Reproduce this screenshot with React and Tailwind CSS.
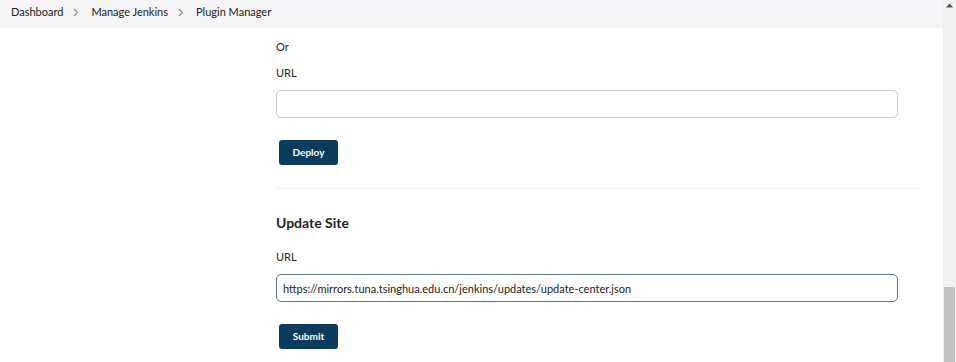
import { useState } from 'react'

function Chevron() {
  return (
    <svg width="6" height="9" viewBox="0 0 6 9" className="ml-[10px] mr-[12px]">
      <path d="M1 1l3.5 3.5L1 8" fill="none" stroke="#8a8a8a" strokeWidth="1.1" />
    </svg>
  )
}

function Field({ value, onChange, active }) {
  return (
    <input
      value={value}
      onChange={e => onChange(e.target.value)}
      className={`w-[622px] h-[28px] rounded-[5px] bg-white px-[6px] text-[11px] text-[#222] outline-none border ${active ? 'border-[#5b7488]' : 'border-[#c5cbd0]'}`}
    />
  )
}

function Btn({ children }) {
  return (
    <button className="ml-[3px] w-[59px] h-[25px] rounded-[3px] bg-[#0b3c5d] text-white text-[10px] font-bold">
      {children}
    </button>
  )
}

export default function App() {
  const [url, setUrl] = useState('')
  const [site, setSite] = useState('https://mirrors.tuna.tsinghua.edu.cn/jenkins/updates/update-center.json')

  return (
    <div className="w-[956px] h-[362px] overflow-hidden flex bg-white text-[#1f1f1f]" style={{ fontFamily: 'Lato, "Noto Sans", sans-serif' }}>
      <div className="flex-1 flex flex-col">
        <div className="h-[28px] bg-[#f5f5f7] flex items-center pl-[11px] pb-[4px] text-[11px] text-[#222]">
          <span>Dashboard</span>
          <Chevron />
          <span>Manage Jenkins</span>
          <Chevron />
          <span>Plugin Manager</span>
        </div>
        <div className="pl-[276px] w-[920px] flex flex-col text-[11px]">
          <p className="mt-[11px] leading-[16px]">Or</p>
          <p className="mt-[10px] leading-[16px]">URL</p>
          <div className="mt-[9px]"><Field value={url} onChange={setUrl} /></div>
          <div className="mt-[22px]"><Btn>Deploy</Btn></div>
          <div className="mt-[23px] border-t border-[#f0f0f2]" />
          <h3 className="mt-[24px] text-[14px] font-bold leading-[20px]">Update Site</h3>
          <p className="mt-[16px] leading-[16px]">URL</p>
          <div className="mt-[9px]"><Field value={site} onChange={setSite} active /></div>
          <div className="mt-[22px]"><Btn>Submit</Btn></div>
        </div>
      </div>
      <div className="w-[13px] bg-[#f1f1f1] flex flex-col">
        <div className="h-[14px] flex items-start justify-center pt-[3px]">
          <svg width="7" height="5" viewBox="0 0 7 5"><path d="M0 4.5L3.5 0.5 7 4.5z" fill="#505050" /></svg>
        </div>
        <div className="mt-[273px] mx-[1px] flex-1 bg-[#c1c1c1]" />
      </div>
    </div>
  )
}
